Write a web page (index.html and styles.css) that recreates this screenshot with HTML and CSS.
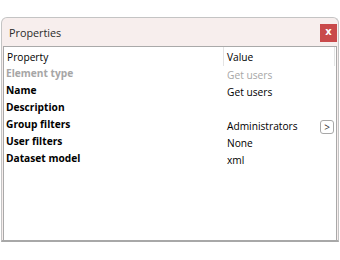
FILE: index.html
```html
<!DOCTYPE html>
<html lang="en">
<head>
  <meta charset="UTF-8">
  <title>Properties</title>
  <link rel="stylesheet" href="styles.css">
</head>
<body>
  <div class="window">
    <div class="titlebar">
      <span class="title">Properties</span>
      <button class="close">x</button>
    </div>
    <div class="panel">
      <div class="header">
        <div class="hcell">Property</div>
        <div class="hcell">Value</div>
      </div>
      <div class="row disabled">
        <div class="name">Element type</div>
        <div class="value">Get users</div>
      </div>
      <div class="row">
        <div class="name">Name</div>
        <div class="value">Get users</div>
      </div>
      <div class="row">
        <div class="name">Description</div>
        <div class="value"></div>
      </div>
      <div class="row">
        <div class="name">Group filters</div>
        <div class="value">Administrators <span class="more">&gt;</span></div>
      </div>
      <div class="row">
        <div class="name">User filters</div>
        <div class="value">None</div>
      </div>
      <div class="row">
        <div class="name">Dataset model</div>
        <div class="value">xml</div>
      </div>
    </div>
  </div>
</body>
</html>
```

FILE: styles.css
```css
body {
  margin: 0;
  background: #fff;
  font-family: "Open Sans", "Liberation Sans", sans-serif;
  font-size: 10.2px;
  color: #000;
}

.window {
  margin: 17px 1px 0 1px;
  height: 225px;
  box-sizing: border-box;
  border: 1px solid #c4c4c4;
  border-bottom: 2px solid #a8a8a8;
  border-radius: 6px 6px 0 0;
  background: #f7eeed;
  display: flex;
  flex-direction: column;
}

.titlebar {
  height: 28px;
  display: flex;
  align-items: center;
  justify-content: space-between;
  padding: 0 1px 0 7px;
}

.title {
  font-size: 10.8px;
  color: #2a2a2a;
}

.close {
  width: 17px;
  height: 18px;
  margin-top: 1px;
  border: none;
  background: #c94a4b;
  color: #fff;
  font-family: "DejaVu Sans", sans-serif;
  font-size: 10px;
  font-weight: bold;
  padding: 0 0 2px;
  line-height: 1;
}

.panel {
  flex: 1;
  margin: 0 1px;
  background: #fff;
  border: 1px solid #a9a9a9;
  border-bottom: none;
}

.header {
  display: grid;
  grid-template-columns: 219px 1fr;
  height: 19px;
}

.hcell {
  padding: 3px 0 0 3px;
}

.hcell + .hcell {
  border-left: 1px solid #e4e4e4;
  border-right: 1px solid #e4e4e4;
  margin-right: 1px;
}

.row {
  display: grid;
  grid-template-columns: 219px 1fr;
  height: 17px;
}

.name {
  font-weight: bold;
  padding-left: 2px;
  line-height: 15px;
}

.value {
  padding-left: 4px;
  padding-top: 2px;
  line-height: 15px;
  display: flex;
  align-items: center;
  height: 15px;
}

.disabled .name,
.disabled .value {
  color: #a6a6a6;
}

.more {
  margin-left: auto;
  margin-right: 2px;
  width: 12px;
  height: 12px;
  border: 1px solid #a8a8a8;
  border-radius: 3px;
  font-size: 10px;
  line-height: 12px;
  text-align: center;
  color: #333;
}
```
